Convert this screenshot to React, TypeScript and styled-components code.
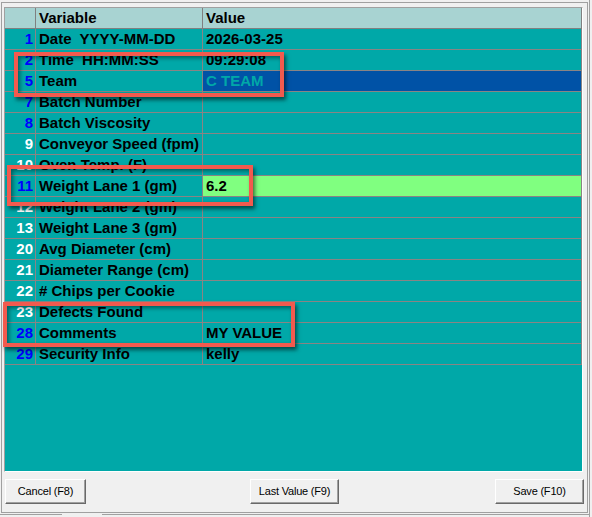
import React from "react";
import styled, { createGlobalStyle } from "styled-components";

const GlobalStyle = createGlobalStyle`
  html, body {
    margin: 0;
    padding: 0;
    background: #f0f0f0;
  }
  body {
    font-family: "Liberation Sans", Arial, sans-serif;
  }
`;

type Row = {
  num: number;
  label: string;
  value?: string;
  required?: boolean;
  state?: "selected" | "edited";
};

const rows: Row[] = [
  { num: 1, label: "Date  YYYY-MM-DD", value: "2026-03-25", required: true },
  { num: 2, label: "Time  HH:MM:SS", value: "09:29:08", required: true },
  { num: 5, label: "Team", value: "C TEAM", required: true, state: "selected" },
  { num: 7, label: "Batch Number", required: true },
  { num: 8, label: "Batch Viscosity", required: true },
  { num: 9, label: "Conveyor Speed (fpm)" },
  { num: 10, label: "Oven Temp. (F)" },
  { num: 11, label: "Weight Lane 1 (gm)", value: "6.2", required: true, state: "edited" },
  { num: 12, label: "Weight Lane 2 (gm)" },
  { num: 13, label: "Weight Lane 3 (gm)" },
  { num: 20, label: "Avg Diameter (cm)" },
  { num: 21, label: "Diameter Range (cm)" },
  { num: 22, label: "# Chips per Cookie" },
  { num: 23, label: "Defects Found" },
  { num: 28, label: "Comments", value: "MY VALUE", required: true },
  { num: 29, label: "Security Info", value: "kelly", required: true },
];

const highlights = [
  { left: 14, top: 52, width: 270, height: 45 },
  { left: 7, top: 165, width: 246, height: 41 },
  { left: 3, top: 302, width: 292, height: 45 },
];

const Frame = styled.div`
  position: relative;
  width: 590px;
  height: 517px;
  box-sizing: border-box;
  border-right: 1px solid #a0a0a0;
  padding-top: 2px;
  display: flex;
  flex-direction: column;
`;

const Window = styled.div`
  margin-left: 1px;
  width: 587px;
  height: 511px;
  box-sizing: border-box;
  border: 1px solid #a0a0a0;
  padding: 4px 4px 8px 2px;
  display: flex;
  flex-direction: column;
`;

const BehindStrip = styled.div`
  margin-top: 1px;
  display: flex;
  gap: 40px;
  height: 2px;
`;

const BehindEdge = styled.div<{ $width?: number }>`
  border-top: 1px solid #a0a0a0;
  ${({ $width }) => ($width ? `width: ${$width}px;` : "flex: 1;")}
`;

const Grid = styled.div`
  height: 465px;
  box-sizing: border-box;
  border: 1px solid;
  border-color: #a0a0a0 #ffffff #ffffff #a0a0a0;
  background: #00a8a8;
  display: flex;
  flex-direction: column;
  font-weight: bold;
  font-size: 15px;
  color: #000;
`;

const GridRow = styled.div`
  display: grid;
  grid-template-columns: 31px 167px 1fr;
  height: 21px;
`;

const HeaderRow = styled(GridRow)`
  background: #a8d3d2;
`;

const Cell = styled.div`
  box-sizing: border-box;
  border-right: 1px solid #8a8484;
  border-bottom: 1px solid #8a8484;
  line-height: 20px;
  white-space: pre;
  overflow: hidden;
`;

const HeaderCell = styled(Cell)`
  border-color: #808080;
  padding-left: 3px;
`;

const NumCell = styled(Cell)<{ $required?: boolean }>`
  text-align: right;
  padding-right: 2px;
  color: ${({ $required }) => ($required ? "#0000ff" : "#ffffff")};
`;

const LabelCell = styled(Cell)`
  padding-left: 3px;
`;

const ValueCell = styled(Cell)<{ $state?: "selected" | "edited" }>`
  padding-left: 3px;
  background: ${({ $state }) =>
    $state === "selected" ? "#0052a6" : $state === "edited" ? "#80ff80" : "transparent"};
  color: ${({ $state }) => ($state === "selected" ? "#00a8a8" : "#000")};
`;

const ButtonBar = styled.div`
  margin: 7px -1px 0 1px;
  display: grid;
  grid-template-columns: 245px 89px 1fr;
`;

const Button = styled.button<{ $width: number; $align?: "start" | "end" }>`
  width: ${({ $width }) => $width}px;
  height: 25px;
  justify-self: ${({ $align }) => $align ?? "start"};
  box-sizing: border-box;
  background: #f0f0f0;
  border: 1px solid;
  border-color: #ffffff #696969 #696969 #ffffff;
  box-shadow: inset -1px -1px 0 #a0a0a0;
  font-family: "Liberation Sans", Arial, sans-serif;
  font-size: 11px;
  letter-spacing: -0.2px;
  color: #000;
  padding: 0 0 1px;
`;

const Highlight = styled.div`
  position: absolute;
  box-sizing: border-box;
  border: 4px solid #f25a4e;
  box-shadow: 2px 3px 4px rgba(0, 0, 0, 0.55), inset 2px 2px 4px rgba(0, 0, 0, 0.45);
  pointer-events: none;
`;

const App: React.FC = () => {
  return (
    <>
      <GlobalStyle />
      <Frame>
        <Window>
          <Grid>
            <HeaderRow>
              <HeaderCell />
              <HeaderCell>Variable</HeaderCell>
              <HeaderCell>Value</HeaderCell>
            </HeaderRow>
            {rows.map(row => (
              <GridRow key={row.num}>
                <NumCell $required={row.required}>{row.num}</NumCell>
                <LabelCell>{row.label}</LabelCell>
                <ValueCell $state={row.state}>{row.value ?? ""}</ValueCell>
              </GridRow>
            ))}
          </Grid>
          <ButtonBar>
            <Button $width={81}>Cancel (F8)</Button>
            <Button $width={89}>Last Value (F9)</Button>
            <Button $width={89} $align="end">Save (F10)</Button>
          </ButtonBar>
        </Window>
        <BehindStrip>
          <BehindEdge $width={62} />
          <BehindEdge />
        </BehindStrip>
        {highlights.map((h, i) => (
          <Highlight
            key={i}
            style={{ left: h.left, top: h.top, width: h.width, height: h.height }}
          />
        ))}
      </Frame>
    </>
  );
};

export default App;
